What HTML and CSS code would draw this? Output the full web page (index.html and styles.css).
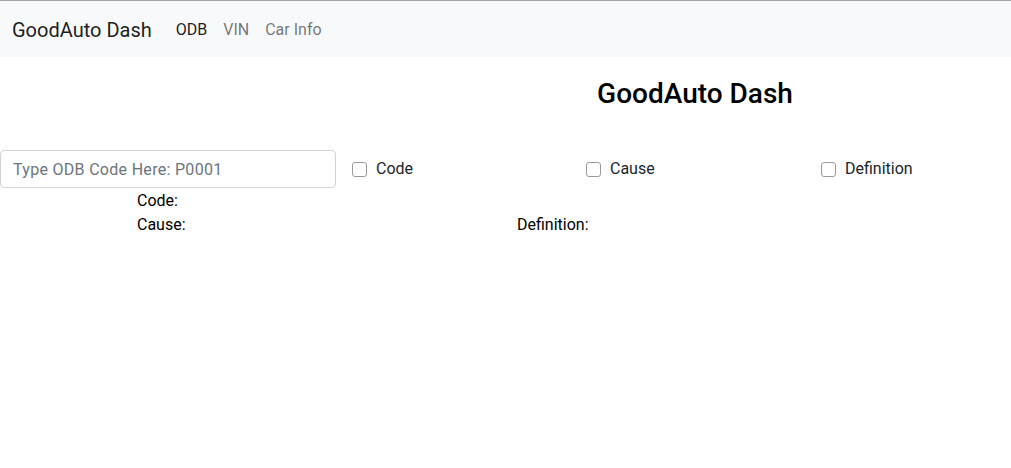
FILE: index.html
```html
<!DOCTYPE html>
<html>
<head>
<meta charset="utf-8">
<link rel="stylesheet" href="styles.css">
</head>
<body>
<nav class="navbar">
  <span class="brand">GoodAuto Dash</span>
  <ul class="nav">
    <li class="nav-link active">ODB</li>
    <li class="nav-link">VIN</li>
    <li class="nav-link">Car Info</li>
  </ul>
</nav>
<main>
  <div class="title-wrap"><h3 class="title">GoodAuto Dash</h3></div>
  <div class="search-row">
    <input class="code-input" type="text" placeholder="Type ODB Code Here: P0001">
    <label class="check"><span class="box"></span>Code</label>
    <label class="check"><span class="box"></span>Cause</label>
    <label class="check"><span class="box"></span>Definition</label>
  </div>
  <div class="results">
    <div class="res-row"><span class="res-label">Code:</span></div>
    <div class="res-row"><span class="res-label">Cause:</span><span class="res-label def">Definition:</span></div>
  </div>
</main>
</body>
</html>
```

FILE: styles.css
```css
* { box-sizing: border-box; }
html, body { margin: 0; padding: 0; }
body {
  font-family: Roboto, "Liberation Sans", sans-serif;
  font-size: 16px;
  line-height: 24px;
  color: #212529;
  background: #fff;
}
.navbar {
  border-top: 1px solid #a3a3a3;
  background: #f8f9fa;
  height: 57px;
  display: flex;
  align-items: center;
  padding: 2px 12px 0;
}
.brand {
  font-size: 20px;
  line-height: 30px;
  color: rgba(0,0,0,0.9);
  margin-right: 16px;
}
.nav {
  list-style: none;
  margin: 0;
  padding: 0;
  display: flex;
}
.nav-link {
  padding: 0 8px;
  color: rgba(0,0,0,0.55);
}
.nav-link.active { color: rgba(0,0,0,0.9); }
.title-wrap {
  margin-left: 379px;
  padding-top: 20px;
  text-align: center;
}
.title {
  margin: 0;
  font-size: 28px;
  line-height: 34px;
  font-weight: 500;
  color: #000;
}
.search-row {
  margin-top: 39px;
  display: grid;
  grid-template-columns: 336px 234px 235px 1fr;
  align-items: center;
}
.code-input {
  width: 336px;
  height: 38px;
  border: 1px solid #ced4da;
  border-radius: 4px;
  padding: 6px 12px;
  font-family: inherit;
  font-size: 16px;
  letter-spacing: 0.3px;
  color: #212529;
}
.code-input::placeholder { color: #6c757d; }
.check {
  display: flex;
  align-items: center;
  margin-left: 16px;
  color: #212529;
}
.box {
  width: 15px;
  height: 15px;
  border: 1px solid #9a9a9a;
  border-radius: 3px;
  margin-right: 9px;
  background: #fff;
}
.results {
  padding-top: 1px;
}
.res-row {
  display: flex;
  height: 24px;
  padding-left: 137px;
  color: #000;
}
.res-label { width: 380px; }
```
